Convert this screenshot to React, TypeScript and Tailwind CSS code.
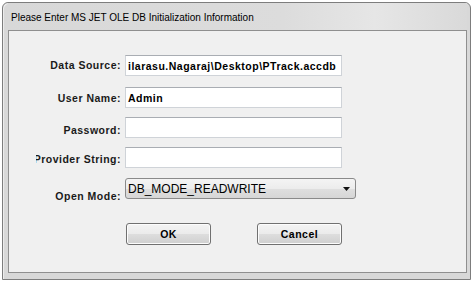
import React from "react";

const labelCls =
  "font-['Liberation_Sans',Arial,sans-serif] font-bold text-[10.5px] leading-[14px] tracking-[0.5px] text-[#1a1a1a] whitespace-nowrap";

function Field({ value }: { value?: string }) {
  return (
    <div className="w-[217px] h-[21px] bg-white border border-[#cfd3d8] border-t-[#a9adb3] flex items-center pl-[2px] overflow-hidden">
      <span className={labelCls + " text-black"}>{value}</span>
    </div>
  );
}

function Row({
  label,
  pt,
  mt,
  children,
}: {
  label: string;
  pt: number;
  mt: string;
  children: React.ReactNode;
}) {
  return (
    <div className={"flex items-start " + mt}>
      <div
        className="ml-[27px] w-[85px] overflow-hidden flex justify-end"
        style={{ paddingTop: pt }}
      >
        <span className={labelCls}>{label}</span>
      </div>
      <div className="ml-[4px]">{children}</div>
    </div>
  );
}

function Button({ children }: { children: React.ReactNode }) {
  return (
    <div className="w-[85px] h-[22px] rounded-[3px] border border-[#707070] bg-[linear-gradient(to_bottom,#f3f3f3_0%,#ebebeb_48%,#dddddd_52%,#cfcfcf_100%)] shadow-[inset_0_0_0_1px_#fcfcfc] flex items-center justify-center">
      <span className={labelCls + " text-black"}>{children}</span>
    </div>
  );
}

export default function App() {
  return (
    <div className="w-[474px] h-[281px] bg-white pl-[2px] pt-[2px] overflow-hidden">
      <div className="w-[469px] h-[278px] border border-[#7d7d7d] rounded-t-[6px] bg-[#d8d8d8] flex flex-col pl-[5px] pr-[3px] pb-[6px] shadow-[inset_1px_1px_0_#ececec]">
        <div className="h-[27px] flex items-center pl-[3px] pt-[1px] bg-[linear-gradient(to_right,#d8d8d8_0%,#dcdcdc_60%,#e6e6e6_80%,#d9d9d9_100%)]">
          <span className="font-['Liberation_Sans',Arial,sans-serif] text-[10px] text-black whitespace-nowrap">
            Please Enter MS JET OLE DB Initialization Information
          </span>
        </div>
        <div className="flex-1 border border-[#8f8f8f] bg-[#f0f0f0] flex flex-col">
          <Row label="Data Source:" pt={3} mt="mt-[24px]">
            <Field value="ilarasu.Nagaraj\Desktop\PTrack.accdb" />
          </Row>
          <Row label="User Name:" pt={4} mt="mt-[11px]">
            <Field value="Admin" />
          </Row>
          <Row label="Password:" pt={6} mt="mt-[9px]">
            <Field />
          </Row>
          <Row label="Provider String:" pt={5} mt="mt-[9px]">
            <Field />
          </Row>
          <Row label="Open Mode:" pt={11} mt="mt-[10px]">
            <div className="w-[231px] h-[21px] rounded-[3px] border border-[#8a8a8a] bg-[linear-gradient(to_bottom,#f4f4f4_0%,#ececec_50%,#dfdfdf_51%,#d6d6d6_100%)] flex items-center pl-[2px] pr-[5px]">
              <span className="flex-1 font-['Liberation_Sans',Arial,sans-serif] text-[12px] leading-[14px] text-black whitespace-nowrap">
                DB_MODE_READWRITE
              </span>
              <svg width="7" height="4" viewBox="0 0 7 4">
                <path d="M0 0 L7 0 L3.5 4 Z" fill="#111" />
              </svg>
            </div>
          </Row>
          <div className="flex mt-[20px] ml-[117px] gap-[46px]">
            <Button>OK</Button>
            <Button>Cancel</Button>
          </div>
        </div>
      </div>
    </div>
  );
}
